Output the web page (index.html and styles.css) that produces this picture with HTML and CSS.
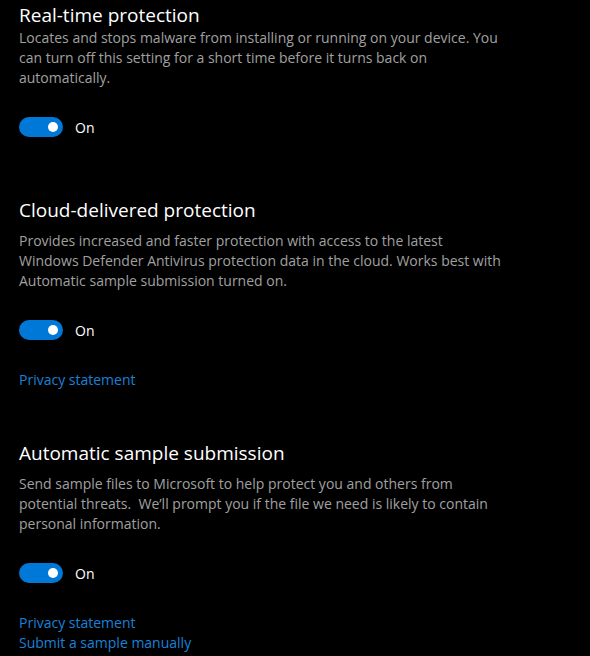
FILE: index.html
```html
<!DOCTYPE html>
<html>
<head>
	<meta charset="utf-8" />
	<title>Virus &amp; threat protection settings</title>
	<link rel="stylesheet" href="styles.css">
</head>
<body>
	<div class="section first">
		<h2>Real-time protection</h2>
		<p class="desc">Locates and stops malware from installing or running on your device. You can turn off this setting for a short time before it turns back on automatically.</p>
		<div class="toggle-row"><span class="toggle"><i></i></span><span class="state">On</span></div>
	</div>
	<div class="section">
		<h2>Cloud-delivered protection</h2>
		<p class="desc">Provides increased and faster protection with access to the latest Windows Defender Antivirus protection data in the cloud. Works best with Automatic sample submission turned on.</p>
		<div class="toggle-row"><span class="toggle"><i></i></span><span class="state">On</span></div>
		<div class="links"><a href="#">Privacy statement</a></div>
	</div>
	<div class="section last">
		<h2>Automatic sample submission</h2>
		<p class="desc">Send sample files to Microsoft to help protect you and others from potential threats.&nbsp; We’ll prompt you if the file we need is likely to contain personal information.</p>
		<div class="toggle-row"><span class="toggle"><i></i></span><span class="state">On</span></div>
		<div class="links"><a href="#">Privacy statement</a><a href="#">Submit a sample manually</a></div>
	</div>
</body>
</html>
```

FILE: styles.css
```css
*{margin: 0;padding: 0;}
body{ background: #000000; color: #ffffff; font-family: "Open Sans", "Noto Sans", sans-serif; padding-left: 19px; }
.section{ margin-top: 59px; }
.section.first{ margin-top: 1px; }
.section.last{ margin-top: 49px; }
.section h2{ font-size: 19px; font-weight: normal; line-height: 28px; }
.section .desc{ margin-top: 7px; width: 485px; font-size: 14px; line-height: 20px; color: #a0a0a0; }
.section.first .desc{ margin-top: -1px; }
.toggle-row{ display: flex; align-items: center; margin-top: 29px; height: 20px; font-size: 14px; }
.toggle{ display: flex; align-items: center; justify-content: flex-end; width: 44px; height: 20px; padding-right: 5px; box-sizing: border-box; border-radius: 10px; background: #0078d7; }
.toggle i{ display: block; width: 10px; height: 10px; border-radius: 50%; background: #ffffff; }
.state{ margin-left: 12px; }
.links{ display: flex; flex-direction: column; margin-top: 30px; }
.links a{ font-size: 14px; line-height: 20px; color: #1a82d8; text-decoration: none; }
```
